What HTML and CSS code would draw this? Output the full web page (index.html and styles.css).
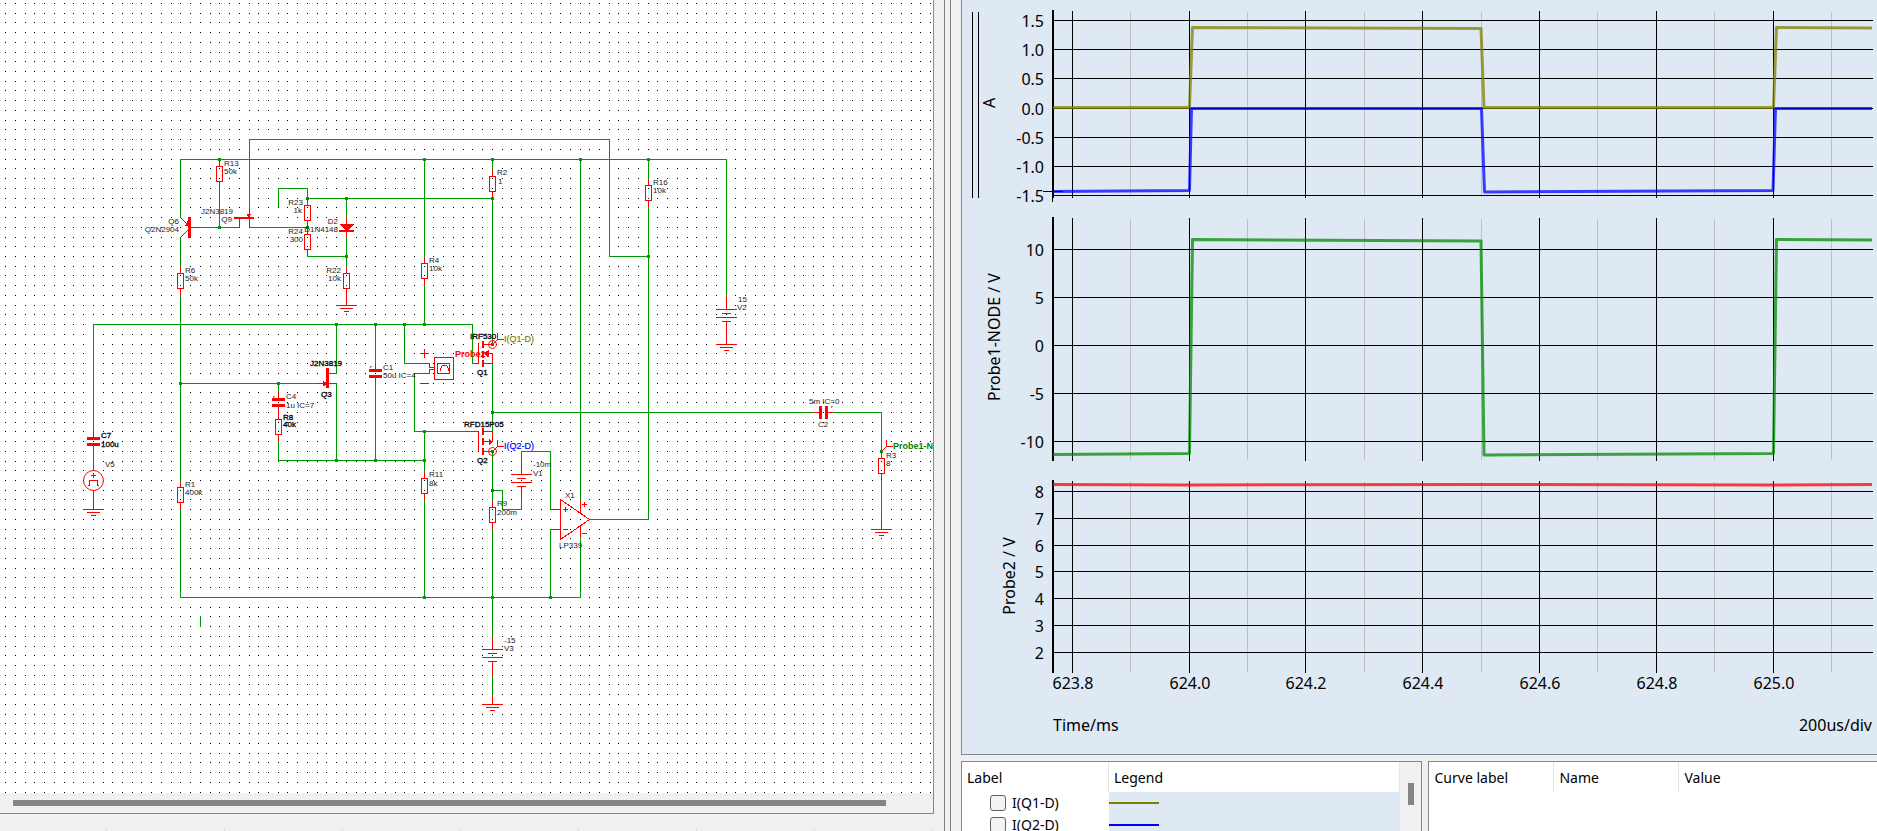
FILE: index.html
```html
<!DOCTYPE html>
<html lang="en">
<head>
<meta charset="utf-8">
<title>Schematic and waveform viewer</title>
<link rel="stylesheet" href="styles.css">
</head>
<body>
<main class="workspace">
  <section class="editor" aria-label="Schematic">
    <div class="sheet">
      <div class="sheet-view">
        <svg class="schematic" width="100%" height="100%">
          <defs>
            <g id="res"><rect x="-3" y="0" width="6" height="15"/><path d="M0,-6V0M0,15V21"/></g>
            <g id="gnd"><path d="M-10,0H10M-6,3H6M-2,6H2"/></g>
            <g id="bat"><path d="M-10,0H10M-4,4H4M-10,8H10M-4,12H4"/></g>
            <g id="cap"><path class="solid" d="M-6.500,-.5h13v3h-13zM-6.500,5.500h13v3h-13z"/><path d="M0,-6V0M0,8V13"/></g>
            <g id="dot"><rect x="-1.500" y="-1.500" width="3" height="3"/></g>
            <g id="tap"><path d="M0,0L5,-5M5,-11V-5H11"/></g>
          </defs>
          <g transform="translate(.5 .5)">
            <path id="grid" class="grid-dots"/>
            <g class="wires">
              <path d="M249,207V139H609V256H648"/>
              <path d="M180,216V159H726V295"/>
              <path d="M219,188V227M200,227H239M249,227H307"/>
              <path d="M278,206V188H307V198H492"/>
              <path d="M307,256H346M346,198V217M346,237V266"/>
              <path d="M180,237V266M180,295V481M180,509V597H580V537"/>
              <path d="M93,430V324H472V363M93,451V459"/>
              <path d="M180,383H315M278,384V391M278,441V460H424"/>
              <path d="M336,324V373M336,383V460M375,324V362M375,383V460"/>
              <path d="M424,159V256M424,285V324M404,324V363H424M424,373H414V431H472"/>
              <path d="M424,431V471M424,499V597"/>
              <path d="M492,159V169M492,198V344M492,363V431M492,451V500M492,528V636M492,675V694"/>
              <path d="M492,412H813M833,412H881V451M881,480V518"/>
              <path d="M492,490H502V509H521V499M521,461V451H550V509M550,529V597"/>
              <path d="M580,159V499M589,519H648V207M648,159V178M200,616V626"/>
            </g>
            <g class="joints">
              <use href="#dot" x="219" y="159"/><use href="#dot" x="424" y="159"/><use href="#dot" x="492" y="159"/>
              <use href="#dot" x="580" y="159"/><use href="#dot" x="648" y="159"/><use href="#dot" x="219" y="227"/>
              <use href="#dot" x="307" y="198"/><use href="#dot" x="307" y="227"/><use href="#dot" x="346" y="198"/>
              <use href="#dot" x="492" y="198"/><use href="#dot" x="346" y="256"/><use href="#dot" x="648" y="256"/>
              <use href="#dot" x="336" y="324"/><use href="#dot" x="375" y="324"/><use href="#dot" x="404" y="324"/>
              <use href="#dot" x="424" y="324"/><use href="#dot" x="180" y="383"/><use href="#dot" x="278" y="383"/>
              <use href="#dot" x="336" y="460"/><use href="#dot" x="375" y="460"/><use href="#dot" x="424" y="460"/>
              <use href="#dot" x="424" y="431"/><use href="#dot" x="492" y="412"/><use href="#dot" x="492" y="344"/>
              <use href="#dot" x="492" y="451"/><use href="#dot" x="492" y="490"/><use href="#dot" x="424" y="597"/>
              <use href="#dot" x="492" y="597"/><use href="#dot" x="550" y="597"/><use href="#dot" x="881" y="451"/>
            </g>
            <g class="parts">
              <use href="#res" x="219" y="166"/><use href="#res" x="180" y="273"/><use href="#res" x="180" y="487"/>
              <use href="#res" x="307" y="205"/><use href="#res" x="307" y="234"/><use href="#res" x="346" y="273"/>
              <use href="#res" x="278" y="419"/><use href="#res" x="424" y="263"/><use href="#res" x="424" y="478"/>
              <use href="#res" x="492" y="176"/><use href="#res" x="492" y="507"/><use href="#res" x="648" y="185"/>
              <use href="#res" x="881" y="458"/>
              <use href="#cap" x="93" y="437"/><use href="#cap" x="278" y="398"/><use href="#cap" x="375" y="369"/>
              <use href="#bat" x="726" y="309"/><use href="#bat" x="521" y="474"/><use href="#bat" x="492" y="649"/>
              <use href="#gnd" x="346" y="305"/><use href="#gnd" x="93" y="509"/><use href="#gnd" x="726" y="344"/>
              <use href="#gnd" x="492" y="704"/><use href="#gnd" x="881" y="529"/>
              <use href="#tap" x="492" y="344"/><use href="#tap" x="492" y="451"/><use href="#tap" x="881" y="451"/>
              <path d="M346,294V305M726,296V309M726,321V344M521,462V474M521,486V498M492,637V649M492,661V674M492,695V704M881,519V529M278,410V413"/>
              <!-- C2 -->
              <path d="M814,412H819M828,412H832"/>
              <path class="solid" d="M818.500,405.500h3v13h-3zM824.500,405.500h3v13h-3z"/>
              <path class="hint" d="M830,406h2M831,405v2M272,396h2M273,395v2M369,366h2M370,365v2"/>
              <!-- Q6 -->
              <path class="solid" d="M187.500,216.500h3v21h-3z"/>
              <path d="M191,227H199M180,217L187,224M187,230L180,237"/>
              <path class="solid" d="M188,219V225H184.500z"/>
              <!-- Q9 -->
              <path class="solid" d="M233.500,216.500h20v2h-20zM246.500,213.500h4l-1,3h-2z"/>
              <path d="M249,208V217M239,218V227M249,218V227"/>
              <!-- D2 -->
              <path class="solid" d="M338.500,223.500H353.500L347,230H345zM338.500,229.500h15v2h-15z"/>
              <path d="M346,218V236"/>
              <!-- V5 -->
              <circle class="soft" cx="93" cy="480" r="10"/>
              <path d="M93,460V470M93,490V509M91,475H95M93,473V477M88,485H89V480H97V485H98"/>
              <!-- Q3 -->
              <path class="solid" d="M325.500,367.500h3v20h-3zM322.500,380.500L328,383L322.500,386z"/>
              <path d="M316,383H325M329,373H336M329,383H336"/>
              <!-- Probe2 -->
              <rect x="434" y="357" width="19" height="22"/><rect x="437" y="363" width="12" height="10"/>
              <path d="M424,363H429V367H434M434,369H429V373H424M420,353H428M424,349V357M420,383H428M440,370V368L442,365H446L448,368V370"/>
              <!-- Q1 -->
              <path d="M473,363H478V343M484,344H492M487,353H492V363H484"/>
              <path class="solid" d="M481.500,340.500h2v7h-2zM481.500,350.500h2v7h-2zM481.500,359.500h2v7h-2zM483,353L488,349.500V357z"/>
              <circle class="soft" cx="492" cy="344" r="4"/>
              <!-- Q2 -->
              <path d="M473,431H478V451M484,431H492V441H484M484,451H492"/>
              <path class="solid" d="M481.500,427.500h2v7h-2zM481.500,437.500h2v7h-2zM481.500,447.500h2v7h-2zM492,441L488,437.500V445z"/>
              <circle class="soft" cx="492" cy="451" r="4"/>
              <!-- X1 -->
              <path d="M560,499V539L589,519ZM551,509H560M551,529H560M563,509H567M565,507V511M563,529H567M580,500V512M580,526V536M582,504H586M584,502V506M582,533H586"/>
            </g>
          </g>
          <g class="labels">
            <text x="224" y="166">R13</text><text x="224" y="174">50k</text>
            <text x="185" y="273">R6</text><text x="185" y="281">50k</text>
            <text x="185" y="487">R1</text><text x="185" y="495">400k</text>
            <text x="286" y="399">C4</text><text x="286" y="408">1u IC=7</text>
            <text x="383" y="370">C1</text><text x="383" y="378">50u IC=4</text>
            <text x="497" y="175">R2</text><text x="498" y="184">1</text>
            <text x="653" y="185">R16</text><text x="653" y="193">10k</text>
            <text x="429" y="263">R4</text><text x="429" y="271">10k</text>
            <text x="738" y="302">15</text><text x="737" y="310">V2</text>
            <text x="533" y="467">-10m</text><text x="533" y="476">V1</text>
            <text x="429" y="477">R11</text><text x="429" y="486">8k</text>
            <text x="497" y="506">R9</text><text x="497" y="515">200m</text>
            <text x="565" y="498">X1</text><text x="559" y="548">LP339</text>
            <text x="809" y="404">5m IC=0</text><text x="818" y="427">C2</text>
            <text x="886" y="458">R3</text><text x="886" y="466">8</text>
            <text x="504" y="643">-15</text><text x="504" y="651">V3</text>
            <text x="105" y="467">V5</text>
            <g class="to-left">
              <text x="233" y="214">J2N3819</text><text x="232" y="222">Q9</text>
              <text x="179" y="224">Q6</text><text x="179" y="232">Q2N2904</text>
              <text x="303" y="205">R23</text><text x="302" y="213">1k</text>
              <text x="303" y="234">R24</text><text x="303" y="242">300</text>
              <text x="338" y="224">D2</text><text x="338" y="232">D1N4148</text>
              <text x="341" y="273">R22</text><text x="341" y="281">10k</text>
            </g>
            <g class="strong">
              <text x="101" y="438">C7</text><text x="101" y="447">100u</text>
              <text x="310" y="366">J2N3819</text><text x="321" y="397">Q3</text>
              <text x="283" y="420">R8</text><text x="283" y="427">40k</text>
              <text x="470" y="339">IRF530</text><text x="477" y="375">Q1</text>
              <text x="464" y="427">RFD15P05</text><text x="477" y="463">Q2</text>
            </g>
            <g class="probes">
              <text class="olive" x="504" y="342">I(Q1-D)</text>
              <text class="blue" x="504" y="449">I(Q2-D)</text>
              <text class="red heavy" x="455" y="357">Probe2</text>
              <text class="green heavy" x="893" y="449">Probe1-NODE</text>
            </g>
          </g>
        </svg>
      </div>
      <div class="hscroll"><div class="hscroll-thumb"></div></div>
    </div>
    <div class="ruler"></div>
  </section>

  <div class="splitter"></div>

  <section class="results" aria-label="Waveforms">
    <div class="chart">
      <svg class="plot" viewBox="962 0 915 754">
        <g transform="translate(.5 .5)">
          <g class="minor">
            <path d="M1130,12V196M1247,12V196M1364,12V196M1481,12V196M1597,12V196M1714,12V196M1831,12V196"/>
            <path d="M1130,219V459M1247,219V459M1364,219V459M1481,219V459M1597,219V459M1714,219V459M1831,219V459"/>
            <path d="M1130,482V671M1247,482V671M1364,482V671M1481,482V671M1597,482V671M1714,482V671M1831,482V671"/>
          </g>
          <g class="major">
            <path d="M1072,11V197M1189,11V197M1305,11V197M1422,11V197M1539,11V197M1656,11V197M1773,11V197"/>
            <path d="M1072,218V460M1189,218V460M1305,218V460M1422,218V460M1539,218V460M1656,218V460M1773,218V460"/>
            <path d="M1072,481V672M1189,481V672M1305,481V672M1422,481V672M1539,481V672M1656,481V672M1773,481V672"/>
            <path d="M1053,20H1872M1053,49H1872M1053,78H1872M1053,108H1872M1053,137H1872M1053,166H1872M1053,195H1872"/>
            <path d="M1053,249H1872M1053,297H1872M1053,345H1872M1053,393H1872M1053,441H1872"/>
            <path d="M1053,491H1872M1053,518H1872M1053,545H1872M1053,571H1872M1053,598H1872M1053,625H1872M1053,652H1872"/>
            <path d="M1052,10V201M1053,10V197M1052,217V460M1053,217V460M1052,480V672M1053,480V672"/>
            <path d="M972,12V197M978,12V197M1043,191H1062"/>
          </g>
        </g>
        <g class="curves">
          <path class="olive" d="M1053,107.500H1189.500L1192.500,27.500L1481,28.500L1484,107.500H1773.500L1776.500,27.500L1872,28"/>
          <path class="blue" d="M1053,191.500L1189.500,190.500L1191.500,108.500H1481.500L1484.500,192L1773,190.500L1775.500,108.500H1872"/>
          <path class="green" d="M1053,454.500L1189.500,453.500L1192.500,239.500L1481,241L1484,455L1773.500,453.500L1776.500,239.500L1872,240"/>
          <path class="red" d="M1053,484.500L1190,485L1483,484.500L1775,485L1872,484.500"/>
        </g>
        <g class="scale-y">
          <text x="1044" y="27">1.5</text><text x="1044" y="56">1.0</text><text x="1044" y="85">0.5</text>
          <text x="1044" y="115">0.0</text><text x="1044" y="144">-0.5</text><text x="1044" y="173">-1.0</text>
          <text x="1044" y="202">-1.5</text>
          <text x="1044" y="256">10</text><text x="1044" y="304">5</text><text x="1044" y="352">0</text>
          <text x="1044" y="400">-5</text><text x="1044" y="448">-10</text>
          <text x="1044" y="498">8</text><text x="1044" y="525">7</text><text x="1044" y="552">6</text>
          <text x="1044" y="578">5</text><text x="1044" y="605">4</text><text x="1044" y="632">3</text>
          <text x="1044" y="659">2</text>
          <text x="1872" y="731">200us/div</text>
        </g>
        <g class="scale-x">
          <text x="1073" y="689">623.8</text><text x="1190" y="689">624.0</text><text x="1306" y="689">624.2</text>
          <text x="1423" y="689">624.4</text><text x="1540" y="689">624.6</text><text x="1657" y="689">624.8</text>
          <text x="1774" y="689">625.0</text>
          <text transform="translate(995 103) rotate(-90)">A</text>
          <text transform="translate(1000 337) rotate(-90)">Probe1-NODE / V</text>
          <text transform="translate(1015 576) rotate(-90)">Probe2 / V</text>
        </g>
        <text x="1053" y="731">Time/ms</text>
      </svg>
    </div>
    <div class="panels">
      <div class="panel legend-panel">
        <table class="legend">
          <colgroup><col class="col-label"><col></colgroup>
          <thead><tr><th>Label</th><th>Legend</th></tr></thead>
          <tbody>
            <tr><td><label class="curve"><input type="checkbox">I(Q1-D)</label></td><td class="swatch"><div class="line line-olive"></div></td></tr>
            <tr><td><label class="curve"><input type="checkbox">I(Q2-D)</label></td><td class="swatch"><div class="line line-blue"></div></td></tr>
          </tbody>
        </table>
        <div class="vscroll"><div class="vscroll-thumb"></div></div>
      </div>
      <div class="panel measure-panel">
        <table class="measures">
          <colgroup><col class="col-measure"><col class="col-measure"><col></colgroup>
          <thead><tr><th>Curve label</th><th>Name</th><th>Value</th></tr></thead>
        </table>
      </div>
    </div>
  </section>
</main>
<script src="grid.js"></script>
</body>
</html>
```
FILE: styles.css
```css
* {
  box-sizing: border-box;
}

body {
  margin: 0;
  background: #f0f0f0;
  color: #000;
  font: 14px/22px "Noto Sans", "Open Sans", sans-serif;
}

.workspace {
  display: grid;
  grid-template-columns: 934fr 27px 916fr;
  height: 100vh;
  overflow: hidden;
}

.editor {
  display: flex;
  flex-direction: column;
  min-width: 0;
  min-height: 0;
}

.sheet {
  flex: 1;
  display: flex;
  flex-direction: column;
  min-height: 0;
  border: solid #828790;
  border-width: 0 1px 1px 0;
}

.sheet-view {
  flex: 1;
  min-height: 0;
  overflow: hidden;
  background: #fff;
}

.schematic {
  display: block;
}

.hscroll {
  padding: 7px 47px 7px 13px;
}

.hscroll-thumb {
  height: 6px;
  background: #858585;
}

.ruler {
  height: 17px;
  background: repeating-linear-gradient(90deg, transparent 0 106px, #d9d9d9 106px 107px, transparent 107px 118px) 0 100% / 118px 2px repeat-x;
}

.splitter {
  margin: 0 10px;
  border: solid #808080;
  border-width: 0 1px;
}

.grid-dots {
  stroke: #000;
}

.grid-dots,
.wires,
.parts {
  fill: none;
  shape-rendering: crispEdges;
}

.wires {
  stroke: #009900;
  stroke-linecap: square;
}

.joints {
  fill: #009900;
  shape-rendering: crispEdges;
}

.parts {
  stroke: #f00;
  stroke-linecap: square;
}

.solid {
  fill: #f00;
  stroke: none;
}

.hint {
  stroke: #888;
  stroke-linecap: butt;
}

.soft {
  shape-rendering: auto;
}

.labels {
  font: 8px "Liberation Sans", Arial, sans-serif;
  fill: #1c1c1c;
}

.to-left {
  text-anchor: end;
}

.strong {
  fill: #000;
  stroke: #000;
  stroke-width: 0.3px;
}

.probes {
  font-size: 9px;
}

.probes .olive { fill: #808000; stroke: #808000; stroke-width: 0.2px; }
.probes .blue { fill: #00f; stroke: #00f; stroke-width: 0.2px; }
.probes .red { fill: #f00; }
.probes .green { fill: #008000; }
.probes .heavy { font-weight: bold; }

.results {
  display: flex;
  flex-direction: column;
  gap: 6px;
  min-width: 0;
  min-height: 0;
}

.chart {
  flex: none;
  border: solid #828790;
  border-width: 0 0 1px 1px;
  background: #dfe9f4;
}

.plot {
  display: block;
  width: 100%;
  height: auto;
  font-size: 16px;
}

.minor,
.major {
  fill: none;
  stroke-linecap: square;
  shape-rendering: crispEdges;
}

.minor { stroke: #c0c0c0; }
.major { stroke: #000; }

.curves {
  fill: none;
  stroke-width: 3px;
  stroke-opacity: 0.75;
  stroke-linejoin: round;
}

.curves .olive { stroke: #808000; }
.curves .blue { stroke: #00f; }
.curves .green { stroke: #008a00; }
.curves .red { stroke: #f00; }

.scale-y { text-anchor: end; }
.scale-x { text-anchor: middle; }

.panels {
  flex: 1;
  display: flex;
  gap: 6px;
  min-height: 0;
}

.panel {
  display: flex;
  min-width: 0;
  overflow: hidden;
  border: solid #828790;
  border-width: 1px 0 0 1px;
  background: #fff;
}

.legend-panel {
  flex: 461;
  border-right-width: 1px;
}

.measure-panel {
  flex: 449;
}

table {
  flex: 1;
  width: 100%;
  height: max-content;
  table-layout: fixed;
  border-collapse: separate;
  border-spacing: 0;
}

.col-label { width: 147px; }
.col-measure { width: 125px; }

th {
  height: 30px;
  padding: 2px 5px 0;
  border-right: 1px solid #e5e5e5;
  font-weight: normal;
  text-align: left;
}

.measures th:last-child {
  border-right: 0;
}

td {
  height: 22px;
  padding: 0;
}

.curve {
  display: flex;
  align-items: center;
  gap: 6px;
  padding-left: 28px;
}

.curve input {
  appearance: none;
  width: 16px;
  height: 16px;
  margin: 0;
  border: 1px solid #626262;
  border-radius: 3px;
  background: #f3f3f3;
}

.swatch {
  background: #dfe9f4;
}

.line {
  width: 50px;
  height: 2px;
}

.line-olive { background: #808000; }
.line-blue { background: #00f; }

.vscroll {
  flex: none;
  width: 21px;
  padding: 21px 7px 0 8px;
  background: #f0f0f0;
}

.vscroll-thumb {
  height: 22px;
  background: #858585;
}
```
FILE: grid.js
```js
// Snap grid: one-pixel dots, a fractional pitch rounded down to whole pixels.
const columns = 200;
const rows = 120;
let d = "";
for (let r = 0; r < rows; r++) {
  const y = Math.floor(3.33 + 9.738 * r);
  for (let c = 0; c < columns; c++) {
    d += `M${Math.floor(5.65 + 9.735 * c) - 0.5},${y}h1`;
  }
}
document.getElementById("grid").setAttribute("d", d);
```
